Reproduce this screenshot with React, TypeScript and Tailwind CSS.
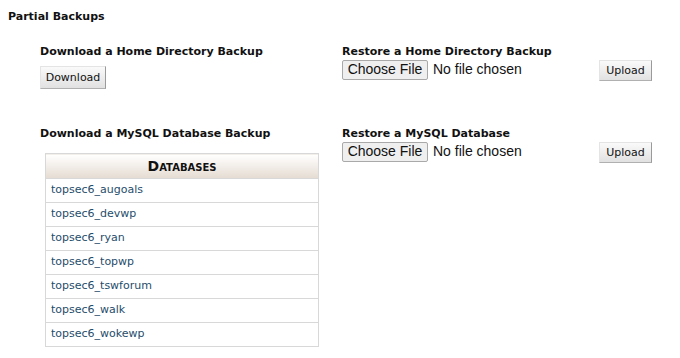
const databases = [
  "topsec6_augoals",
  "topsec6_devwp",
  "topsec6_ryan",
  "topsec6_topwp",
  "topsec6_tswforum",
  "topsec6_walk",
  "topsec6_wokewp",
];

function GrayButton({ label, className = "" }: { label: string; className?: string }) {
  return (
    <button
      type="button"
      className={
        "border border-t-[#e4e4e4] border-l-[#e4e4e4] border-r-[#9a9a9a] border-b-[#b0b0b0] bg-gradient-to-b from-[#fafafa] to-[#e1e1e1] text-[11px] leading-none text-[#111] " +
        className
      }
    >
      {label}
    </button>
  );
}

function FileRow() {
  return (
    <div className="flex items-start">
      <div className="flex items-center font-['Liberation_Sans',Arial,sans-serif] text-[14px] text-[#111]">
        <span className="flex h-[20px] w-[86px] items-center justify-center rounded-[2px] border border-[#a9a9a9] bg-[#efefef]">
          Choose File
        </span>
        <span className="ml-[5px]">No file chosen</span>
      </div>
      <GrayButton label="Upload" className="ml-auto mt-[1px] h-[21px] w-[53px]" />
    </div>
  );
}

export default function App() {
  return (
    <div className="min-h-[358px] w-[680px] bg-white pt-[10px] font-['DejaVu_Sans',Verdana,sans-serif] text-[#111]">
      <h2 className="pl-[8px] text-[11px] font-bold leading-[14px]">Partial Backups</h2>

      {/* home directory */}
      <div className="mt-[21px] flex pl-[40px]">
        <div className="w-[302px]">
          <h3 className="text-[11px] font-bold leading-[14px]">Download a Home Directory Backup</h3>
          <GrayButton label="Download" className="mt-[7px] h-[23px] w-[66px]" />
        </div>
        <div className="w-[310px]">
          <h3 className="text-[11px] font-bold leading-[14px]">Restore a Home Directory Backup</h3>
          <FileRow />
        </div>
      </div>

      {/* mysql */}
      <div className="mt-[38px] flex pl-[40px]">
        <div className="w-[302px]">
          <h3 className="text-[11px] font-bold leading-[14px]">Download a MySQL Database Backup</h3>
          <table className="ml-[5px] mt-[12px] w-[274px] border-collapse border border-[#d8d8d8] text-[11px]">
            <thead>
              <tr>
                <th className="h-[25px] border-b border-[#d8d8d8] bg-gradient-to-b from-white to-[#e5dcd2] text-center text-[14px] font-bold text-[#111] [font-variant:small-caps]">
                  Databases
                </th>
              </tr>
            </thead>
            <tbody>
              {databases.map((db) => (
                <tr key={db} className="border-b border-[#d8d8d8] last:border-0">
                  <td className="h-[24px] px-[5px] text-left text-[#1f4d6b]">{db}</td>
                </tr>
              ))}
            </tbody>
          </table>
        </div>
        <div className="w-[310px]">
          <h3 className="text-[11px] font-bold leading-[14px]">Restore a MySQL Database</h3>
          <FileRow />
        </div>
      </div>
    </div>
  );
}
